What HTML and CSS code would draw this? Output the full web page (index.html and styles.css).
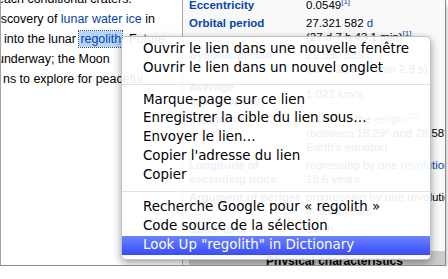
FILE: index.html
```html
<!DOCTYPE html>
<html>
<head>
<meta charset="utf-8">
<link rel="stylesheet" href="styles.css">
</head>
<body>
<div class="window">
  <div class="page">
    <div class="article">
      <div class="line l0">each conditional craters.</div>
      <div class="line l1">discovery of <a class="link">lunar water ice</a> in</div>
      <div class="line l2">into the lunar <a class="link sel">regolith</a>. Future</div>
      <div class="line l3">underway; the Moon</div>
      <div class="line l4">ns to explore for peaceful</div>
    </div>
    <div class="infobox">
      <table class="ib">
        <tr><th><a class="lab">Eccentricity</a></th><td>0.0549<sup>[1]</sup></td></tr>
        <tr><th><a class="lab">Orbital period</a></th><td>27.321 582 <a class="link">d</a><br>(27 d 7 h 43.1 min)<sup>[1]</sup></td></tr>
        <tr><th><a class="lab">Synodic period</a></th><td>29.530 589 <a class="link">d</a><br>(29 d 12 h 44 min 2.9 s)</td></tr>
        <tr><th><a class="lab">Average<br>orbital speed</a></th><td>1.022 km/s</td></tr>
        <tr><th><a class="lab">Inclination</a></th><td>5.145° to the <a class="link">ecliptic</a><sup>[1]</sup><br>(between 18.29° and 28.58° to<br>Earth's equator)</td></tr>
        <tr><th><a class="lab">Longitude of<br>ascending node</a></th><td>regressing by one <a class="link">revolution</a> in<br>18.6 years</td></tr>
        <tr><th><a class="lab">Argument of perigee</a></th><td>progressing by one revolution<br>in 8.85 years</td></tr>
        <tr><th><a class="lab">Satellite of</a></th><td><a class="link">Earth</a></td></tr>
      </table>
      <div class="ibhead">Physical characteristics</div>
    </div>
  </div>
  <div class="menu">
    <div class="item">Ouvrir le lien dans une nouvelle fenêtre</div>
    <div class="item">Ouvrir le lien dans un nouvel onglet</div>
    <div class="sep"></div>
    <div class="item">Marque-page sur ce lien</div>
    <div class="item">Enregistrer la cible du lien sous…</div>
    <div class="item">Envoyer le lien…</div>
    <div class="item">Copier l'adresse du lien</div>
    <div class="item">Copier</div>
    <div class="sep sep2"></div>
    <div class="item">Recherche Google pour « regolith »</div>
    <div class="item">Code source de la sélection</div>
    <div class="item hl">Look Up "regolith" in Dictionary</div>
  </div>
</div>
</body>
</html>
```
FILE: styles.css
```css
html, body {
  margin: 0;
  padding: 0;
  background: #ffffff;
}
.window {
  position: relative;
  width: 444px;
  height: 265px;
  border-left: 1px solid #a3a3a3;
  border-right: 1px solid #8a8a8a;
  border-bottom: 1px solid #8a8a8a;
  background: #ffffff;
  overflow: hidden;
  box-shadow: 0 4px 5px -1px rgba(0,0,0,0.55);
}
.page {
  display: flex;
  align-items: flex-start;
}
.article {
  width: 181px;
  flex: none;
  margin-top: -11px;
  font-family: "Liberation Sans", Arial, sans-serif;
  font-size: 12.45px;
  line-height: 20px;
  color: #000;
}
.line {
  white-space: nowrap;
}
.l0 { margin-left: -4px; }
.l1 { margin-left: -10px; }
.l2 { margin-left: 3px; }
.l3 { margin-left: -4px; }
.l4 { margin-left: 2px; }
.link {
  color: #0645ad;
}
.sel {
  background: #b5d5ff;
  outline: 1px dotted #3a4a6a;
  padding: 1px 1px;
}
.infobox {
  flex: none;
  width: 285px;
  border-left: 1px solid #aaaaaa;
  background: #f9f9f9;
  padding-left: 6px;
  margin-top: -4px;
  height: 290px;
  font-family: "Liberation Sans", Arial, sans-serif;
  font-size: 11.5px;
  line-height: 14px;
  color: #000;
}
.ib {
  border-collapse: collapse;
}
.ib th, .ib td {
  padding: 2px 0;
  white-space: nowrap;
}
.ib th {
  width: 117px;
  text-align: left;
  vertical-align: top;
  font-weight: bold;
}
.ib td {
  vertical-align: middle;
}
.lab {
  color: #0645ad;
}
sup {
  font-size: 8px;
  line-height: 8px;
  color: #0645ad;
}
.ibhead {
  margin-top: 13px;
  background: #cccccc;
  text-align: center;
  font-weight: bold;
  font-size: 12px;
  line-height: 16px;
  padding-top: 2px;
  margin-right: -6px;
}
.menu {
  position: absolute;
  left: 120px;
  top: 36px;
  width: 308px;
  padding: 3px 0 4px;
  background: rgba(255,255,255,0.92);
  border: 1px solid rgba(120,120,120,0.45);
  border-radius: 5px;
  box-shadow: 0 3px 9px rgba(0,0,0,0.38);
  font-family: "DejaVu Sans", Verdana, sans-serif;
  font-size: 13.4px;
  color: #000;
}
.item {
  height: 18.75px;
  line-height: 18.75px;
  padding-left: 21px;
  white-space: nowrap;
}
.sep {
  height: 1px;
  background: #e2e2e2;
  margin: 6px 0 6px;
}
.sep2 {
  margin: 7px 0 6px;
}
.hl {
  color: #ffffff;
  background: linear-gradient(to bottom, #6a83fd 0%, #4e64fb 55%, #3a4cfa 100%);
}
```
